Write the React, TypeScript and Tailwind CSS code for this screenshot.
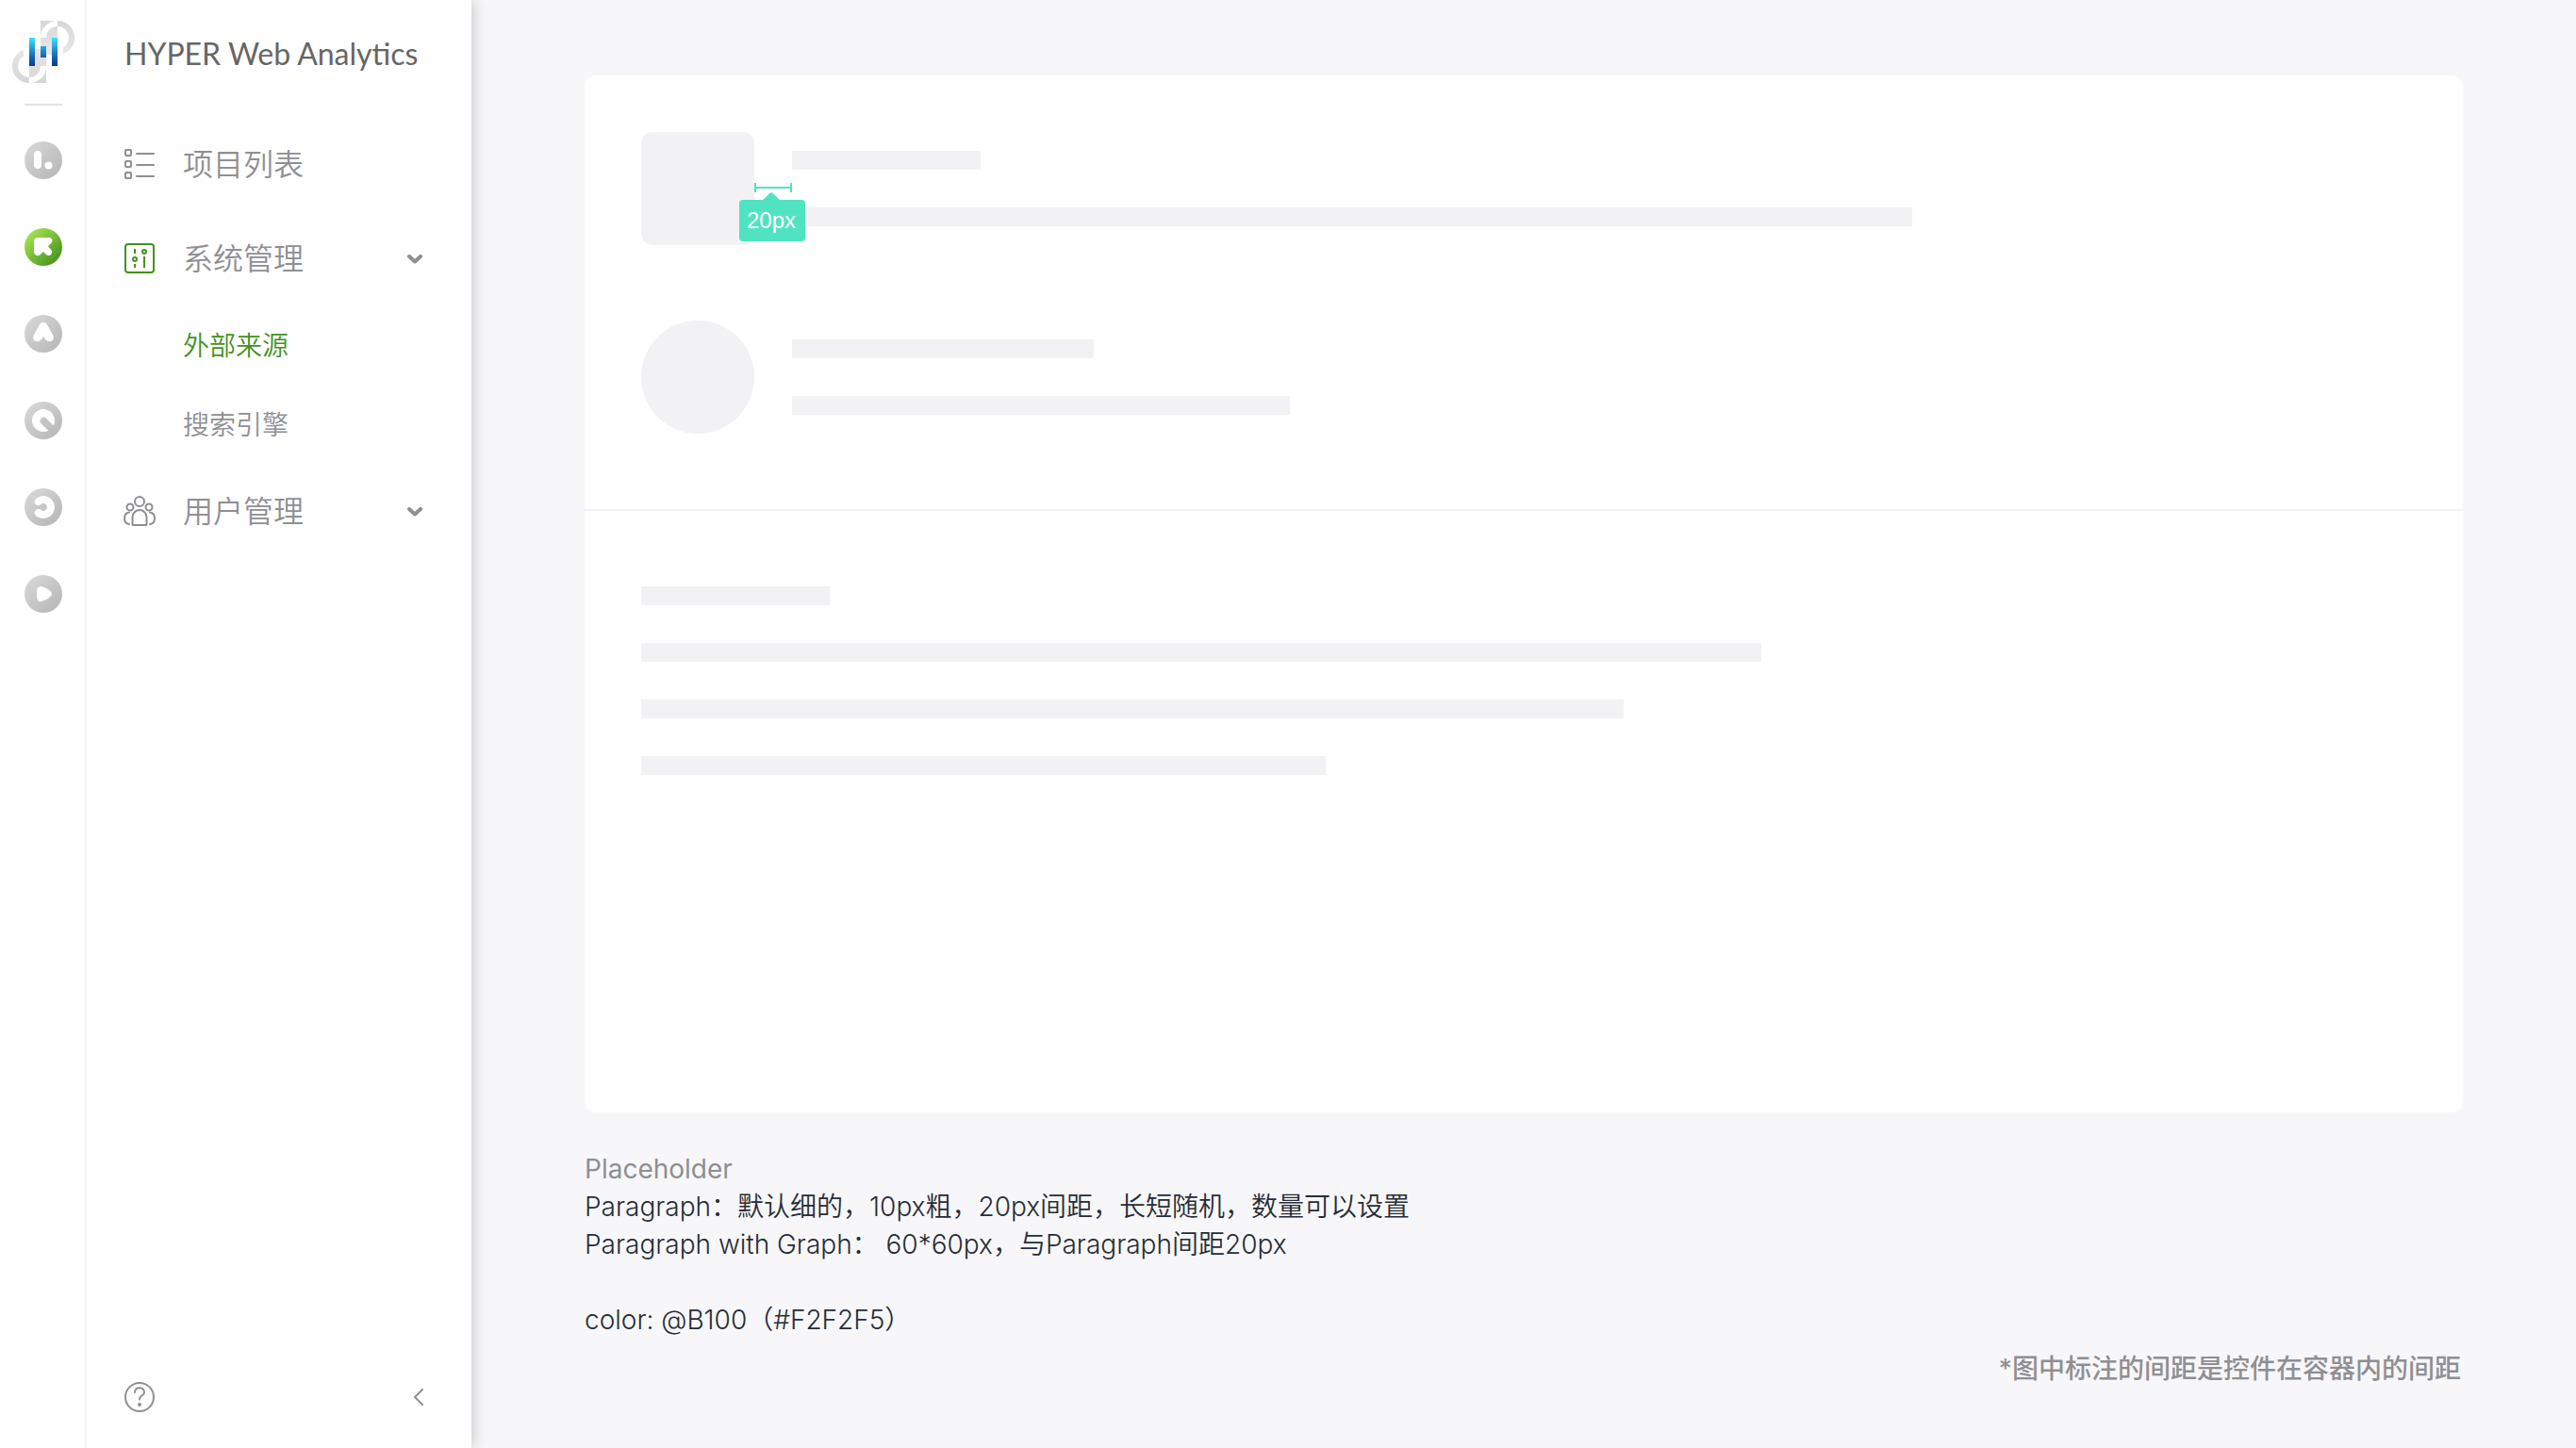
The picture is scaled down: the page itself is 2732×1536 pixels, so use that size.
import React from "react";

const SANS = "font-['Inter','Noto_Sans_CJK_SC',sans-serif] [font-variant-ligatures:no-contextual]";

function Logo() {
  return (
    <svg className="h-[66px] w-[66px]" viewBox="0 0 66 66" aria-hidden="true">
      <defs>
        <linearGradient id="logoBlue" x1="0" y1="18" x2="0" y2="48" gradientUnits="userSpaceOnUse">
          <stop offset="0" stopColor="#3be3ff" />
          <stop offset="0.65" stopColor="#1b66b3" />
          <stop offset="1" stopColor="#0a3a8c" />
        </linearGradient>
        <linearGradient id="logoGrayTop" x1="0" y1="0" x2="0" y2="36" gradientUnits="userSpaceOnUse">
          <stop offset="0" stopColor="#d6d6d6" />
          <stop offset="1" stopColor="#e8e8e8" />
        </linearGradient>
        <linearGradient id="logoGrayBottom" x1="0" y1="30" x2="0" y2="66" gradientUnits="userSpaceOnUse">
          <stop offset="0" stopColor="#e6e6e6" />
          <stop offset="1" stopColor="#d6d6d6" />
        </linearGradient>
      </defs>
      <path fill="url(#logoGrayTop)" d="M48 0A18 18 0 0 1 54 35V28.400A12 12 0 0 0 48 6Z" />
      <path fill="url(#logoGrayTop)" d="M30 0H48A18 18 0 0 0 30 18Z" />
      <path fill="url(#logoGrayTop)" d="M48 6V36H30V18H36A12 12 0 0 1 48 6Z" />
      <path fill="url(#logoGrayBottom)" d="M18 66A18 18 0 0 1 12 31V37.600A12 12 0 0 0 18 60Z" />
      <path fill="url(#logoGrayBottom)" d="M36 66H18A18 18 0 0 0 36 48Z" />
      <path fill="url(#logoGrayBottom)" d="M18 60V30H30V48A12 12 0 0 1 18 60ZM30 36H36V48H30Z" />
      <path fill="url(#logoBlue)" d="M18 18H24V48H18ZM30 27H36V39H30ZM42 18H48V48H42Z" />
    </svg>
  );
}

function AppBadge({ active = false, children }: { active?: boolean; children: React.ReactNode }) {
  return (
    <svg className="block size-10" viewBox="0 0 40 40" fill="#fff" aria-hidden="true">
      <defs>
        <linearGradient id="badgeGray" x1="0" y1="0" x2="1" y2="1">
          <stop offset="0.1" stopColor="#d6d6d6" />
          <stop offset="0.9" stopColor="#b8b8b8" />
        </linearGradient>
        <linearGradient id="badgeGreen" x1="0" y1="0" x2="1" y2="1">
          <stop offset="0.1" stopColor="#aae351" />
          <stop offset="0.9" stopColor="#43921f" />
        </linearGradient>
      </defs>
      <circle cx="20" cy="20" r="20" fill={active ? "url(#badgeGreen)" : "url(#badgeGray)"} />
      {children}
    </svg>
  );
}

const apps: { name: string; active?: boolean; glyph: React.ReactNode }[] = [
  {
    name: "L",
    glyph: (
      <>
        <rect x="10" y="10" width="8" height="19" rx="4" />
        <circle cx="25.500" cy="25.500" r="4" />
      </>
    ),
  },
  {
    name: "K",
    active: true,
    glyph: (
      <path d="M14 10H26C29.500 10 30.300 13.500 28.600 15.400L25 19.500L28.200 23C30.800 26 27.500 30.800 23.500 28.400L19.800 25L16.500 28.200C14 30.300 10 28.800 10 25V14A4 4 0 0 1 14 10Z" />
    ),
  },
  {
    name: "A",
    glyph: (
      <path d="M20 8C22 8 23.300 9 24.200 10.600L30.200 21.500C32.500 26 28.500 29.500 24.500 27.800C22 26.800 20.800 24.800 20 22.500C19.200 24.800 18 26.800 15.500 27.800C11.500 29.500 7.500 26 9.800 21.500L15.800 10.600C16.700 9 18 8 20 8Z" />
    ),
  },
  {
    name: "Q",
    glyph: (
      <path d="M20 8A12 12 0 0 1 30.700 25.400L22.800 17.500A4 4 0 0 0 17 22.800L25.200 30.800A12 12 0 1 1 20 8Z" />
    ),
  },
  {
    name: "E",
    glyph: (
      <path d="M20 8A12 12 0 1 1 11 28C9.500 26 11.500 22.500 14 22H16.500A4 4 0 1 0 16.500 17.800C15 18.300 13.500 18 12.500 17.500C10.500 16.500 10 13.500 11.500 11.800C13.800 9.300 17 8 20 8Z" />
    ),
  },
  {
    name: "D",
    glyph: (
      <path d="M13.500 14.500C14.200 12.300 16 11.500 18.500 12.200C22 13.300 25.500 15 27.800 17.500C29.400 19.200 29.400 20.800 27.800 22.500C25.500 25 22 26.700 18.500 27.800C16 28.500 14.200 27.700 13.500 25.500C12.700 22.500 12.700 17.500 13.500 14.500Z" />
    ),
  },
];

function ListIcon() {
  return (
    <svg className="size-8 shrink-0" viewBox="0 0 32 32" fill="none" stroke="currentColor" strokeWidth="2" aria-hidden="true">
      <rect x="1" y="1" width="6" height="6" rx="1" />
      <rect x="1" y="13" width="6" height="6" rx="1" />
      <rect x="1" y="25" width="6" height="6" rx="1" />
      <path strokeLinecap="round" d="M13 5H31M13 17H31M13 29H31" />
    </svg>
  );
}

function SettingsIcon() {
  return (
    <svg className="size-8 shrink-0 text-[#43921f]" viewBox="0 0 32 32" fill="none" stroke="currentColor" strokeWidth="2" aria-hidden="true">
      <rect x="1" y="1" width="30" height="30" rx="3" />
      <circle cx="11" cy="17" r="2" />
      <circle cx="21" cy="9" r="2" />
      <path d="M11 6V11M11 22V26M21 14V26" />
    </svg>
  );
}

function UsersIcon() {
  return (
    <svg className="-mx-px h-8 w-[34px] shrink-0" viewBox="0 0 34 32" fill="none" stroke="currentColor" strokeWidth="2" aria-hidden="true">
      <circle cx="17" cy="6" r="5" />
      <circle cx="7" cy="12" r="3.500" />
      <circle cx="27" cy="12" r="3.500" />
      <path strokeLinecap="round" d="M10 31C9.400 31 9.500 30 9.500 29V22.500A7.500 7.500 0 0 1 24.500 22.500V29C24.500 30 24.600 31 24 31ZM6 17.500C3 18 1 20.500 1 24C1 27 3 29.500 6 30M28 17.500C31 18 33 20.500 33 24C33 27 31 29.500 28 30" />
    </svg>
  );
}

function ChevronDown() {
  return (
    <svg className="mt-0.5 ml-auto h-[10px] w-4 shrink-0" viewBox="0 0 16 10" fill="none" stroke="currentColor" strokeWidth="4" strokeLinecap="round" strokeLinejoin="round" aria-hidden="true">
      <path d="M2 2L8 7.500L14 2" />
    </svg>
  );
}

function Bar({ width }: { width: string }) {
  return <div className={`h-5 max-w-full bg-[#f2f2f4] ${width}`} />;
}

function SpacingMark() {
  return (
    <div className="absolute top-[54px] left-full w-10">
      <svg className="block h-[10px] w-10" viewBox="0 0 40 10" stroke="#50e3c2" strokeWidth="2" aria-hidden="true">
        <path d="M1 0V10M39 0V10M1 5H39" />
      </svg>
      <div className="absolute top-[18px] -left-4 flex h-11 w-[70px] items-center rounded bg-[#50e3c2] px-2 font-['Liberation_Sans',sans-serif] text-2xl text-white">
        <svg className="absolute -top-2 left-[25px] h-2 w-[18px]" viewBox="0 0 18 8" fill="#50e3c2" aria-hidden="true">
          <path d="M0 8L8 0.500Q9 0 10 0.500L18 8Z" />
        </svg>
        20px
      </div>
    </div>
  );
}

export default function App() {
  return (
    <div className={`flex min-h-screen bg-[#f7f7f9] text-[28px] leading-10 text-[#272c38] ${SANS}`}>
      <aside className="z-10 flex w-[500px] shrink-0 bg-white shadow-[4px_0_12px_rgba(0,0,0,0.15)]">
        <div className="flex w-[92px] shrink-0 flex-col items-center border-r-2 border-[#f2f2f4] pt-[22px] pl-0.5">
          <a href="#home" aria-label="HYPER">
            <Logo />
          </a>
          <hr className="mt-[22px] w-10 border-0 border-t-2 border-[#e2e2e8]" />
          <nav className="mt-[38px] flex flex-col gap-[52px]" aria-label="Apps">
            {apps.map((app) => (
              <a key={app.name} href={`#${app.name}`} aria-label={app.name}>
                <AppBadge active={app.active}>{app.glyph}</AppBadge>
              </a>
            ))}
          </nav>
        </div>

        <div className="flex flex-1 flex-col px-10 text-[#8f8f93]">
          <h1 className="mt-[37px] font-['Lato',sans-serif] text-[32px] text-[#666666]">HYPER Web Analytics</h1>
          <nav className="mt-[47px] flex flex-col text-[32px] font-[350]" aria-label="Menu">
            <a href="#projects" className="flex h-[100px] items-center gap-[30px]">
              <ListIcon />
              <span className="pt-0.5">项目列表</span>
            </a>
            <button type="button" className="flex h-[100px] items-center gap-[30px] pr-3">
              <SettingsIcon />
              <span className="pt-0.5">系统管理</span>
              <ChevronDown />
            </button>
            <a href="#sources" className="flex h-[84px] items-center pl-[62px] text-[28px] text-[#43921f]">
              <span className="pt-0.5">外部来源</span>
            </a>
            <a href="#engines" className="flex h-[84px] items-center pl-[62px] text-[28px]">
              <span className="pt-0.5">搜索引擎</span>
            </a>
            <button type="button" className="flex h-[100px] items-center gap-[30px] pr-3">
              <UsersIcon />
              <span className="pt-0.5">用户管理</span>
              <ChevronDown />
            </button>
          </nav>
          <div className="mt-auto flex items-center justify-between pr-[11px] pb-[38px]">
            <button type="button" aria-label="Help">
              <svg className="block size-8" viewBox="0 0 32 32" fill="none" stroke="currentColor" strokeWidth="2" strokeLinecap="round" aria-hidden="true">
                <circle cx="16" cy="16" r="15" />
                <path d="M11 11C11 4.500 21 4.500 21 11C21 15 16 13.500 16 18.500" />
                <circle cx="16" cy="24" r="2" fill="currentColor" stroke="none" />
              </svg>
            </button>
            <button type="button" aria-label="Collapse menu">
              <svg className="block h-[18px] w-[10px]" viewBox="0 0 10 18" fill="none" stroke="currentColor" strokeWidth="2" strokeLinecap="round" strokeLinejoin="round" aria-hidden="true">
                <path d="M9 1L1 9L9 17" />
              </svg>
            </button>
          </div>
        </div>
      </aside>

      <main className="flex min-w-0 flex-1 flex-col px-[120px] pt-20 pb-10">
        <section className="min-h-[1100px] rounded-xl bg-white">
          <div className="flex flex-col gap-20 border-b-2 border-[#f3f3f3] px-[60px] pt-[60px] pb-20">
            <div className="flex items-center gap-10">
              <div className="relative z-10 size-[120px] shrink-0 rounded-xl bg-[#f2f2f4]">
                <SpacingMark />
              </div>
              <div className="flex min-w-0 flex-1 flex-col gap-10">
                <Bar width="w-[200px]" />
                <Bar width="w-[1188px]" />
              </div>
            </div>
            <div className="flex items-center gap-10">
              <div className="size-[120px] shrink-0 rounded-full bg-[#f2f2f4]" />
              <div className="flex min-w-0 flex-1 flex-col gap-10">
                <Bar width="w-[320px]" />
                <Bar width="w-[528px]" />
              </div>
            </div>
          </div>
          <div className="flex flex-col gap-10 px-[60px] py-20">
            <Bar width="w-[200px]" />
            <Bar width="w-[1188px]" />
            <Bar width="w-[1042px]" />
            <Bar width="w-[726px]" />
          </div>
        </section>

        <div className="mt-10 font-[350]">
          <h2 className="font-normal text-[#8f8f8f]">Placeholder</h2>
          <p>Paragraph：默认细的，10px粗，20px间距，长短随机，数量可以设置</p>
          <p>Paragraph with Graph： 60*60px，与Paragraph间距20px</p>
          <p className="mt-10">color: @B100（#F2F2F5）</p>
        </div>
        <p className="mt-3 pr-0.5 text-right font-medium text-[#8f8f93]">*图中标注的间距是控件在容器内的间距</p>
      </main>
    </div>
  );
}
